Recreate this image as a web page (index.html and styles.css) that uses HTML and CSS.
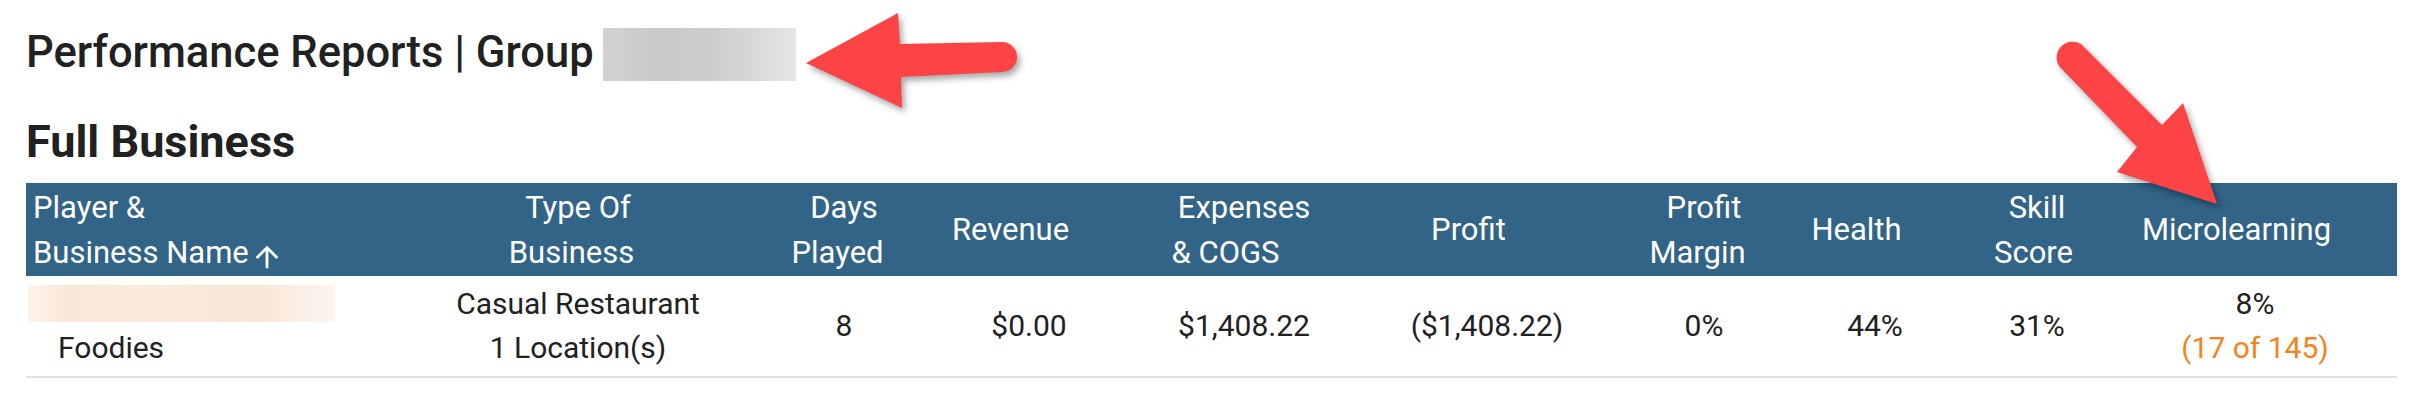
FILE: index.html
```html
<!DOCTYPE html>
<html lang="en">
<head>
<meta charset="utf-8">
<title>Performance Reports</title>
<link rel="stylesheet" href="styles.css">
</head>
<body>
<div class="page">
  <h1 class="title">Performance Reports | Group T<span class="redact-title"></span></h1>
  <h2 class="section">Full Business</h2>
  <table class="report">
    <colgroup>
      <col class="c1"><col class="c2"><col class="c3"><col class="c4"><col class="c5">
      <col class="c6"><col class="c7"><col class="c8"><col class="c9"><col class="c10">
    </colgroup>
    <thead>
      <tr>
        <th class="th-name"><span class="ln">Player &amp;</span><span class="ln">Business Name<svg class="sort-arrow" viewBox="0 0 24 24" width="34" height="34"><path d="M4 12l1.41 1.41L11 7.83V20h2V7.83l5.58 5.59L20 12l-8-8-8 8z"/></svg></span></th>
        <th><span class="ln">Type Of</span><span class="ln sh-s">Business</span></th>
        <th><span class="ln">Days</span><span class="ln sh-s">Played</span></th>
        <th class="sh-one">Revenue</th>
        <th><span class="ln">Expenses</span><span class="ln sh-l">&amp; COGS</span></th>
        <th class="sh-one">Profit</th>
        <th><span class="ln">Profit</span><span class="ln sh-s">Margin</span></th>
        <th class="sh-one">Health</th>
        <th><span class="ln">Skill</span><span class="ln sh-xs">Score</span></th>
        <th class="sh-one">Microlearning</th>
      </tr>
    </thead>
    <tbody>
      <tr>
        <td class="td-name"><div class="redact-name"></div><div class="biz">Foodies</div></td>
        <td><div>Casual Restaurant</div><div>1 Location(s)</div></td>
        <td>8</td>
        <td>$0.00</td>
        <td>$1,408.22</td>
        <td>($1,408.22)</td>
        <td>0%</td>
        <td>44%</td>
        <td>31%</td>
        <td><div>8%</div><div class="count">(17 of 145)</div></td>
      </tr>
    </tbody>
  </table>
</div>
<svg class="annot" width="2413" height="413" viewBox="0 0 2413 413">
  <path class="red-arrow" d="M806,63 L898,13 L900,44 L1002,42 A15,15 0 0 1 1002,72 L901,77 L902,108 Z"/>
  <path class="red-arrow" d="M2217,204 L2117,172 L2137,147 L2059,66 A16,16 0 0 1 2081,44 L2162,125 L2183,103 Z"/>
</svg>
</body>
</html>
```
FILE: styles.css
```css
html, body {
  margin: 0;
  padding: 0;
  background: #ffffff;
}
body {
  position: relative;
  width: 2413px;
  height: 413px;
  overflow: hidden;
  font-family: Roboto, "Liberation Sans", sans-serif;
  color: #212121;
}
.page {
  padding: 25px 16px 0 26px;
}
.title {
  margin: 0;
  font-size: 43.5px;
  font-weight: 500;
  line-height: 56px;
  white-space: nowrap;
}
.redact-title {
  display: inline-block;
  position: relative;
  width: 193px;
  height: 53px;
  margin-left: -27px;
  margin-top: 3px;
  vertical-align: top;
  background: linear-gradient(90deg, #d2d2d2 0%, #c9c9c9 30%, #cdcdcd 55%, #d6d6d6 75%, #e6e6e6 100%);
}
.section {
  margin: 33px 0 0 0;
  font-size: 45px;
  font-weight: 700;
  line-height: 56px;
}
.report {
  margin-top: 13px;
  width: 2371px;
  border-collapse: collapse;
  table-layout: fixed;
}
.c1 { width: 367px; }
.c2 { width: 370px; }
.c3 { width: 162px; }
.c4 { width: 208px; }
.c5 { width: 222px; }
.c6 { width: 264px; }
.c7 { width: 170px; }
.c8 { width: 172px; }
.c9 { width: 152px; }
.c10 { width: 284px; }
.report thead tr {
  background: #316487;
}
.report th {
  height: 93px;
  padding: 0;
  color: #ffffff;
  font-size: 31px;
  font-weight: 400;
  line-height: 45px;
  text-align: center;
  vertical-align: middle;
}
.report th .ln {
  display: block;
  white-space: nowrap;
}
.report th.th-name {
  text-align: left;
  padding-left: 7px;
}
.sort-arrow {
  width: 34px;
  height: 34px;
  fill: #ffffff;
  vertical-align: -11px;
  margin-left: 1px;
}
.sh-one { padding-right: 37px !important; }
.sh-s { padding-right: 13px; }
.sh-xs { padding-right: 7px; }
.sh-l { padding-right: 37px; }
.report td {
  padding: 6px 0;
  font-size: 30px;
  line-height: 44px;
  text-align: center;
  vertical-align: middle;
  border-bottom: 2px solid #e0e0e0;
  white-space: nowrap;
}
.report td.td-name {
  text-align: left;
  padding-left: 7px;
}
.redact-name {
  width: 306px;
  height: 37px;
  margin: 3px 0 4px -5px;
  background: linear-gradient(90deg, #fdf3eb 0%, #fbe7d9 12%, #fbe9dc 40%, #fae6d7 75%, #fdf5ef 100%);
}
.biz {
  padding-left: 25px;
}
.count {
  color: #f7821b;
}
.annot {
  position: absolute;
  top: 0;
  left: 0;
  pointer-events: none;
}
.red-arrow {
  fill: #fc4346;
  filter: drop-shadow(3px 4px 3px rgba(0, 0, 0, 0.35));
}
```
